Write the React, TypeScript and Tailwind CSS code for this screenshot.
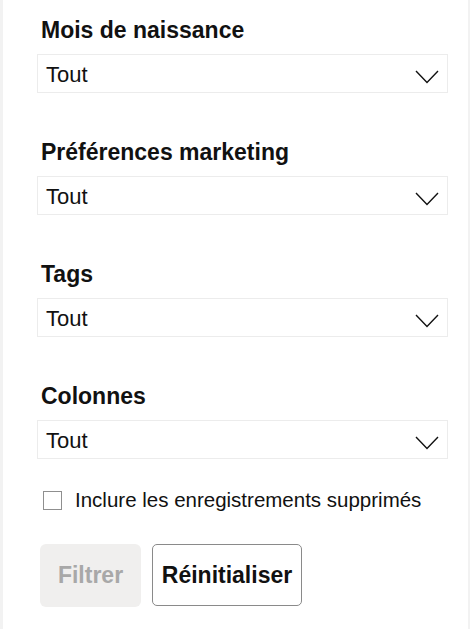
import { useState } from 'react'

const filters = ['Mois de naissance', 'Préférences marketing', 'Tags', 'Colonnes']

function Chevron() {
  return (
    <svg width="24" height="14" viewBox="0 0 24 14" fill="none" className="shrink-0">
      <polyline points="1,1 12,12.5 23,1" stroke="#111" strokeWidth="1.4" />
    </svg>
  )
}

function SelectField({ label }: { label: string }) {
  return (
    <div className="mb-[29px]">
      <div className="pl-[4px] pt-4 text-[23px] font-bold leading-[28px] text-[#111]">{label}</div>
      <div className="mt-[10px] flex h-[39px] items-start justify-between border border-[#ececec] bg-white pl-[8px] pr-[8px] pt-[8px]">
        <span className="text-[22px] leading-[24px] text-[#111]">Tout</span>
        <div className="pt-[7px]">
          <Chevron />
        </div>
      </div>
    </div>
  )
}

export default function App() {
  const [checked, setChecked] = useState(false)

  return (
    <div className="min-h-screen bg-[#f2f2f2] pl-[3px] pr-[2px]" style={{ fontFamily: '"Liberation Sans", Arial, sans-serif' }}>
      <div className="min-h-screen bg-white pl-[34px] pr-[20px]">
        {filters.map((f) => (
          <SelectField key={f} label={f} />
        ))}

        <label className="ml-[6px] flex h-[24px] items-center gap-[13px]">
          <span
            onClick={() => setChecked(!checked)}
            className="block h-[19px] w-[19px] border-[1.5px] border-[#8f8f8f] bg-white"
          />
          <span className="text-[20.5px] leading-[24px] text-[#111]">Inclure les enregistrements supprimés</span>
        </label>

        <div className="ml-[3px] mt-[32px] flex gap-[11px]">
          <button className="h-[63px] w-[101px] rounded-[6px] bg-[#f0efee] text-[23px] font-bold text-[#a8a8a8]">
            Filtrer
          </button>
          <button className="h-[62px] w-[150px] rounded-[5px] border-[1.5px] border-[#8a8a8a] bg-white text-[23px] font-bold text-[#111]">
            Réinitialiser
          </button>
        </div>
      </div>
    </div>
  )
}
